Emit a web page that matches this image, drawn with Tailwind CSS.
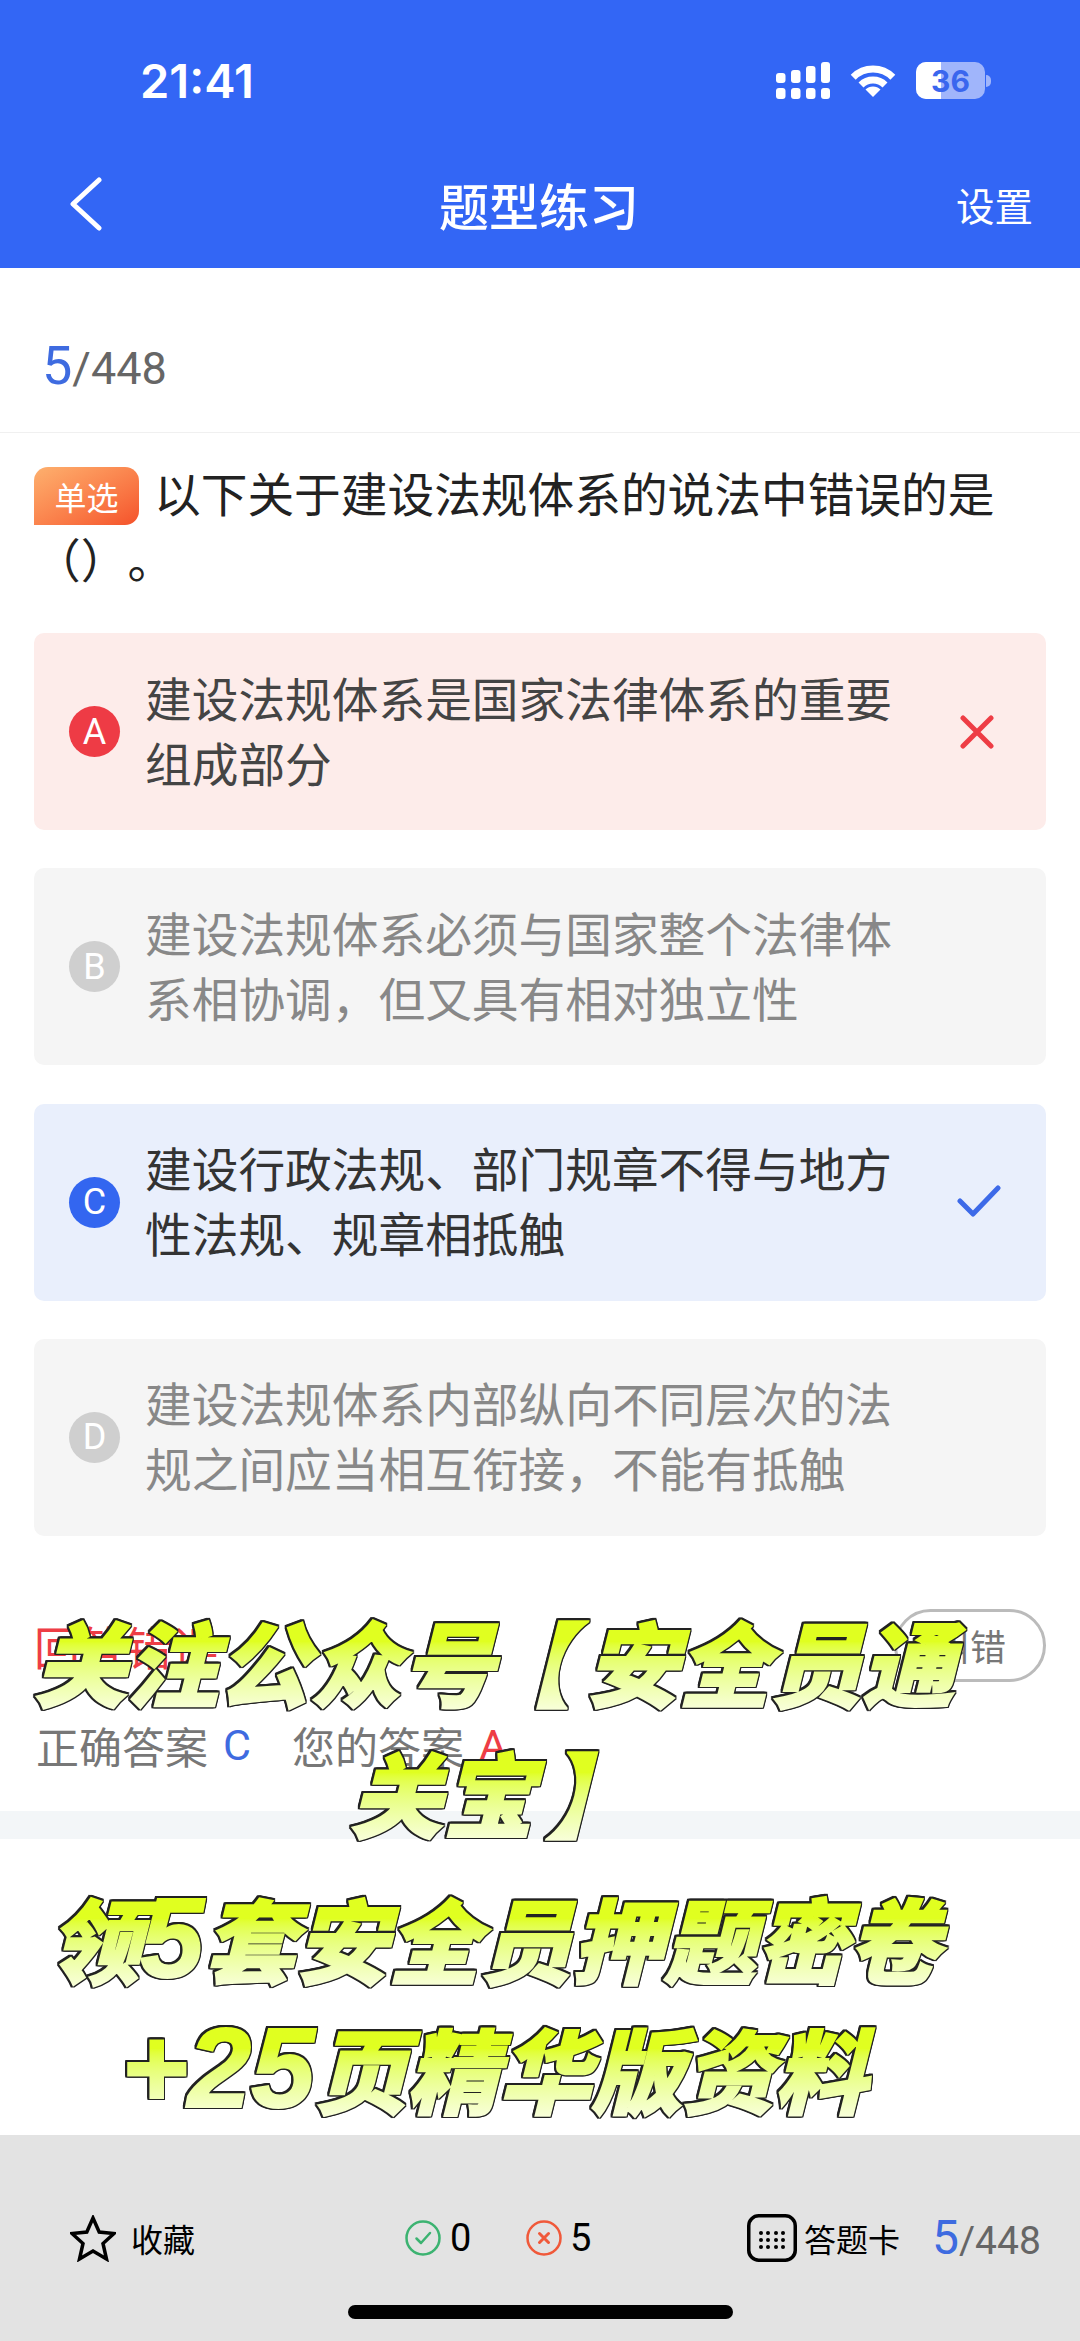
<!DOCTYPE html>
<html lang="zh-CN">
<head>
    <meta charset="UTF-8">
    <meta name="viewport" content="width=device-width, initial-scale=1.0">
    <title>题型练习</title>
    <script src="https://cdn.jsdelivr.net/npm/@tailwindcss/browser@4"></script>
</head>
<body class="bg-white">
    <div class="relative w-[1080px] h-[2341px] overflow-hidden flex flex-col bg-white font-['Noto_Sans_CJK_SC',sans-serif]">

        <!-- header -->
        <header class="h-[268px] bg-[#3366f5] text-white flex flex-col shrink-0">
            <div class="h-[62px] shrink-0"></div>
            <div class="h-[37px] shrink-0 flex items-center pl-[140px] pr-[89px] justify-between">
                <span class="font-['Inter',sans-serif] font-semibold text-[47px] leading-none">21:41</span>
                <div class="flex items-center gap-[20px]">
                    <svg width="54" height="37" viewBox="0 0 54 37" fill="#fff">
                        <rect x="0" y="11" width="9.5" height="10" rx="3"/>
                        <rect x="15" y="8" width="9.5" height="13" rx="3"/>
                        <rect x="30" y="4" width="9.5" height="17" rx="3"/>
                        <rect x="45" y="0" width="9" height="21" rx="3"/>
                        <rect x="0" y="26" width="9.5" height="11" rx="3"/>
                        <rect x="15" y="26" width="9.5" height="11" rx="3"/>
                        <rect x="30" y="26" width="9.5" height="11" rx="3"/>
                        <rect x="45" y="26" width="9" height="11" rx="3"/>
                    </svg>
                    <svg width="46" height="32" viewBox="0 0 46 32" fill="none" stroke="#fff" stroke-width="7">
                        <path d="M3.2 12.2A28 28 0 0 1 42.8 12.2"/>
                        <path d="M11 20A17 17 0 0 1 35 20"/>
                        <path d="M23 32L15.5 24.500A10.600 10.600 0 0 1 30.500 24.500Z" fill="#fff" stroke="none"/>
                    </svg>
                    <div class="flex items-center gap-[1px]">
                        <div class="relative w-[69px] h-[37px] rounded-[10px] overflow-hidden bg-[#a0b5fb] flex items-center justify-center">
                            <div class="absolute left-0 top-0 bottom-0 w-[25px] bg-white"></div>
                            <span class="relative font-['Inter',sans-serif] font-bold text-[30px] leading-none text-[#3a66ee]">36</span>
                        </div>
                        <div class="w-[5px] h-[12px] rounded-r-full bg-[#a0b5fb]"></div>
                    </div>
                </div>
            </div>
            <nav class="mt-[75px] h-[60px] flex items-center pl-[69px] pr-[47px]">
                <svg width="34" height="54" viewBox="0 0 34 54" fill="none" stroke="#fff" stroke-width="5" stroke-linecap="round" stroke-linejoin="round">
                    <path d="M30 3L4 27L30 51"/>
                </svg>
                <h1 class="ml-[336px] text-[50px] leading-none font-medium">题型练习</h1>
                <span class="ml-auto text-[38.500px] leading-none">设置</span>
            </nav>
        </header>

        <!-- counter -->
        <div class="h-[165px] shrink-0 border-b border-[#f0f0f0] flex items-baseline pl-[42px] pt-[71px] font-['Roboto',sans-serif] leading-none">
            <span class="text-[54px] text-[#3e6be0]">5</span>
            <span class="text-[45px] text-[#666]">/448</span>
        </div>

        <!-- question -->
        <p class="pt-[26px] pb-[2px] pl-[34px] pr-[78px] text-[46.700px] leading-[66px] text-[#222] [text-spacing-trim:space-all]">
            <span class="inline-flex items-center justify-center align-[2px] w-[105px] h-[58px] mr-[15px] rounded-[14px] rounded-bl-none bg-linear-to-br from-[#fdb06e] to-[#f4512a] text-white text-[32px] leading-none">单选</span>以下关于建设法规体系的说法中错误的是（）。
        </p>

        <!-- options -->
        <div class="mt-[40px] mx-[34px] flex flex-col gap-[38.300px]">
            <div class="h-[197px] rounded-[10px] bg-[#fdecea] flex items-center pl-[35px] pr-[52px]">
                <span class="w-[51px] h-[51px] shrink-0 rounded-full bg-[#ee3b45] text-white flex items-center justify-center font-['Roboto',sans-serif] text-[36px]">A</span>
                <span class="ml-[25px] mb-[6px] w-[752px] text-[46.700px] leading-[65px] text-[#444]">建设法规体系是国家法律体系的重要组成部分</span>
                <svg class="ml-auto" width="34" height="34" viewBox="0 0 34 34" fill="none" stroke="#ee3d45" stroke-width="5" stroke-linecap="round"><path d="M3 3L31 31M31 3L3 31"/></svg>
            </div>
            <div class="h-[197px] rounded-[10px] bg-[#f5f5f5] flex items-center pl-[35px] pr-[52px]">
                <span class="w-[51px] h-[51px] shrink-0 rounded-full bg-[#cfcfcf] text-white flex items-center justify-center font-['Roboto',sans-serif] text-[36px]">B</span>
                <span class="ml-[25px] mb-[6px] w-[752px] text-[46.700px] leading-[65px] text-[#888]">建设法规体系必须与国家整个法律体系相协调，但又具有相对独立性</span>
            </div>
            <div class="h-[197px] rounded-[10px] bg-[#e9effc] flex items-center pl-[35px] pr-[45px]">
                <span class="w-[51px] h-[51px] shrink-0 rounded-full bg-[#3366f0] text-white flex items-center justify-center font-['Roboto',sans-serif] text-[36px]">C</span>
                <span class="ml-[25px] mb-[6px] w-[752px] text-[46.700px] leading-[65px] text-[#333]">建设行政法规、部门规章不得与地方性法规、规章相抵触</span>
                <svg class="ml-auto mb-[3px]" width="44" height="32" viewBox="0 0 44 32" fill="none" stroke="#3d6ae8" stroke-width="5" stroke-linecap="round" stroke-linejoin="round"><path d="M3 16L16 29L41 3"/></svg>
            </div>
            <div class="h-[197px] rounded-[10px] bg-[#f5f5f5] flex items-center pl-[35px] pr-[52px]">
                <span class="w-[51px] h-[51px] shrink-0 rounded-full bg-[#cfcfcf] text-white flex items-center justify-center font-['Roboto',sans-serif] text-[36px]">D</span>
                <span class="ml-[25px] mb-[6px] w-[752px] text-[46.700px] leading-[65px] text-[#888]">建设法规体系内部纵向不同层次的法规之间应当相互衔接，不能有抵触</span>
            </div>
        </div>

        <!-- answer -->
        <div class="mt-[73px] mx-[34px] h-[73px] flex items-center justify-between">
            <span class="text-[46px] leading-none text-[#ee3d45]">回答错误</span>
            <span class="w-[152px] h-[73px] rounded-full border-[3px] border-[#bbb] text-[#777] text-[36px] leading-none flex items-center justify-center">纠错</span>
        </div>
        <div class="mt-[39px] ml-[36px] h-[50px] flex items-center text-[43px] leading-none text-[#777]">
            <span>正确答案</span>
            <span class="ml-[15px] font-['Roboto',sans-serif] text-[#3e6be0]">C</span>
            <span class="ml-[41px]">您的答案</span>
            <span class="ml-[15px] font-['Roboto',sans-serif] text-[#ee3d45]">A</span>
        </div>
        <div class="mt-[40px] h-[28px] shrink-0 bg-[#f3f6f8]"></div>
        <div class="flex-1"></div>

        <!-- bottom bar -->
        <footer class="h-[206px] shrink-0 bg-[#e3e3e3] flex flex-col">
            <div class="mt-[79px] h-[48px] flex items-center text-black">
                <div class="w-[405px] pl-[70px] flex items-center">
                    <svg width="46" height="47" viewBox="0 0 46 47" fill="none" stroke="#000" stroke-width="3.500" stroke-linejoin="miter"><path d="M23 3L29.200 17L44 18.500L33 28.500L36.500 44L23 36L9.500 44L13 28.500L2 18.500L16.800 17Z"/></svg>
                    <span class="ml-[15px] text-[32px] leading-none">收藏</span>
                </div>
                <div class="w-[342px] flex items-center font-['Roboto',sans-serif] text-[38px] leading-none">
                    <svg width="36" height="36" viewBox="0 0 36 36" fill="none" stroke="#3cb371" stroke-width="2.500" stroke-linecap="round" stroke-linejoin="round"><circle cx="18" cy="18" r="16.500"/><path d="M11.500 18.500L16 23L25 13"/></svg>
                    <span class="ml-[9px] w-[19px]">0</span>
                    <svg class="ml-[57px]" width="36" height="36" viewBox="0 0 36 36" fill="none" stroke="#f0593a" stroke-width="2.500" stroke-linecap="round"><circle cx="18" cy="18" r="16.500"/><path d="M13.500 13.500L22.500 22.500M22.500 13.500L13.500 22.500" stroke-width="3"/></svg>
                    <span class="ml-[8px]">5</span>
                </div>
                <svg width="50" height="48" viewBox="0 0 50 48" fill="#000">
                    <rect x="1.750" y="1.750" width="46.500" height="44.500" rx="10" fill="none" stroke="#000" stroke-width="3.500"/>
                    <circle cx="14" cy="19" r="2"/><circle cx="21" cy="19" r="2"/><circle cx="29" cy="19" r="2"/><circle cx="36" cy="19" r="2"/>
                    <circle cx="14" cy="26" r="2"/><circle cx="21" cy="26" r="2"/><circle cx="29" cy="26" r="2"/><circle cx="36" cy="26" r="2"/>
                    <circle cx="14" cy="33" r="2"/><circle cx="21" cy="33" r="2"/><circle cx="29" cy="33" r="2"/><circle cx="36" cy="33" r="2"/>
                </svg>
                <span class="ml-[7px] text-[32px] leading-none">答题卡</span>
                <div class="ml-[32px] flex items-baseline font-['Roboto',sans-serif] leading-none">
                    <span class="text-[48px] text-[#3e6be0]">5</span>
                    <span class="text-[39px] text-[#666]">/448</span>
                </div>
            </div>
            <div class="mt-[43px] ml-[348px] w-[385px] h-[14px] rounded-full bg-black"></div>
        </footer>

        <!-- promo text lying over the page -->
        <div class="absolute left-0 top-[1597px] w-[988px] text-center font-['Liberation_Sans','Noto_Sans_CJK_SC',sans-serif] font-black italic text-[92px] leading-[135px]">
            <div class="h-[135px] pt-[4px]"><span class="inline-block px-5 text-transparent bg-clip-text bg-linear-to-b from-[#e0ff20] from-[30%] to-[#f8ffd8] to-[80%] [-webkit-text-stroke:2px_transparent] [filter:drop-shadow(1.2px_0_0_#222)_drop-shadow(-1.2px_0_0_#222)_drop-shadow(0_1.2px_0_#222)_drop-shadow(0_-1.2px_0_#222)]">关注公众号<span class="-ml-[15px] mr-[15px]">【</span>安全员通</span></div>
            <div class="h-[135px]"><span class="inline-block px-5 text-transparent bg-clip-text bg-linear-to-b from-[#e0ff20] from-[30%] to-[#f8ffd8] to-[80%] [-webkit-text-stroke:2px_transparent] [filter:drop-shadow(1.2px_0_0_#222)_drop-shadow(-1.2px_0_0_#222)_drop-shadow(0_1.2px_0_#222)_drop-shadow(0_-1.2px_0_#222)]">关宝<span class="ml-[12px]">】</span></span></div>
            <div class="h-[135px] pt-[11px]"><span class="inline-block px-5 text-transparent bg-clip-text bg-linear-to-b from-[#e0ff20] from-[30%] to-[#f8ffd8] to-[80%] [-webkit-text-stroke:2px_transparent] [filter:drop-shadow(1.2px_0_0_#222)_drop-shadow(-1.2px_0_0_#222)_drop-shadow(0_1.2px_0_#222)_drop-shadow(0_-1.2px_0_#222)]">领<span class="text-[114px] leading-none">5</span>套安全员押题密卷</span></div>
            <div class="h-[135px] pt-[6px]"><span class="inline-block px-5 text-transparent bg-clip-text bg-linear-to-b from-[#e0ff20] from-[30%] to-[#f8ffd8] to-[80%] [-webkit-text-stroke:2px_transparent] [filter:drop-shadow(1.2px_0_0_#222)_drop-shadow(-1.2px_0_0_#222)_drop-shadow(0_1.2px_0_#222)_drop-shadow(0_-1.2px_0_#222)]"><span class="text-[114px] leading-none">+25</span>页精华版资料</span></div>
        </div>
    </div>
</body>
</html>
